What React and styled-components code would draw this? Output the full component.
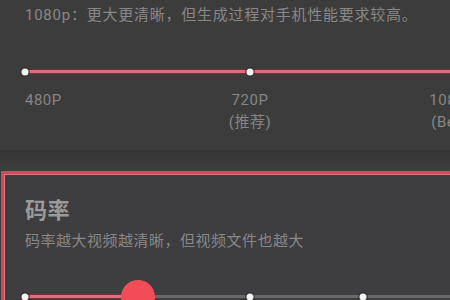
import React from "react";
import styled, { createGlobalStyle } from "styled-components";

const GlobalStyle = createGlobalStyle`
  html, body {
    margin: 0;
    padding: 0;
    background: #3c3c3c;
  }
  body {
    font-family: Roboto, "Noto Sans CJK SC", sans-serif;
  }
`;

const Screen = styled.div`
  width: 450px;
  height: 300px;
  overflow: hidden;
  background: #3c3c3c;
  color: #8c8c8c;
`;

const Section = styled.section`
  height: 150px;
  box-sizing: border-box;
  padding: 5px 0 0 25px;
`;

const Desc = styled.p`
  margin: ${(p) => p.$gap || 0}px 0 0;
  font-size: 15px;
  line-height: 20px;
  letter-spacing: ${(p) => p.$spacing || 0.5}px;
  white-space: nowrap;
  color: #888888;
`;

const Title = styled.h2`
  margin: 0;
  font-size: 22px;
  line-height: 30px;
  font-weight: 700;
  letter-spacing: 0.5px;
  color: #9a9a9a;
`;

const Divider = styled.div`
  height: 21px;
  background: linear-gradient(#343434, #3a3a3a 60%, #3e3e3e);
`;

const Card = styled.section`
  width: 470px;
  height: 140px;
  margin-left: 1px;
  box-sizing: border-box;
  border: 3px solid #d04b57;
  border-right: none;
  background: #3e3d3f;
  padding: 22px 0 0 21px;
  box-shadow: inset 1px 1px 0 #e07883;
`;

const Rail = styled.div`
  position: relative;
  width: 450px;
  height: 3px;
  margin-top: ${(p) => p.$top}px;
  background: #686868;
`;

const Fill = styled.div`
  height: 100%;
  width: ${(p) => p.$value * 100}%;
  background: #dc6f7e;
  box-shadow: 0 0 0 1px rgba(140, 40, 55, 0.85);
`;

const Dot = styled.span`
  position: absolute;
  top: 50%;
  left: ${(p) => p.$at * 100}%;
  width: 7px;
  height: 7px;
  border-radius: 50%;
  background: #f4f4f4;
  transform: translate(-50%, -50%);
  box-shadow: 0 0 0 1.5px rgba(45, 45, 45, 0.7);
`;

const Thumb = styled.span`
  position: absolute;
  top: 50%;
  left: ${(p) => p.$at * 100}%;
  width: 34px;
  height: 34px;
  border-radius: 50%;
  background: #f24c58;
  transform: translate(-50%, -50%);
`;

const Labels = styled.div`
  display: grid;
  grid-template-columns: 1fr 1fr 1fr;
  width: 450px;
  margin-top: 16px;
`;

const Label = styled.div`
  text-align: ${(p) => p.$align};
  font-size: 15px;
  line-height: 22px;
  letter-spacing: 0.5px;
  color: #858585;
`;

const Slider = ({ stops, value, thumb, top }) => (
  <Rail $top={top}>
    <Fill $value={value} />
    {stops.map((s) => (
      <Dot key={s} $at={s} />
    ))}
    {thumb && <Thumb $at={value} />}
  </Rail>
);

const resolutions = [
  { name: "480P", align: "left" },
  { name: "720P", note: "(推荐)", align: "center" },
  { name: "1080P", note: "(Beta)", align: "right" },
];

export default function App() {
  return (
    <Screen>
      <GlobalStyle />
      <Section>
        <Desc $spacing={0.75}>1080p：更大更清晰，但生成过程对手机性能要求较高。</Desc>
        <Slider stops={[0, 0.5, 1]} value={1} top={45} />
        <Labels>
          {resolutions.map((r) => (
            <Label key={r.name} $align={r.align}>
              {r.name}
              {r.note && <br />}
              {r.note}
            </Label>
          ))}
        </Labels>
      </Section>
      <Divider />
      <Card>
        <Title>码率</Title>
        <Desc $gap={5}>码率越大视频越清晰，但视频文件也越大</Desc>
        <Slider stops={[0, 0.25, 0.5, 0.75, 1]} value={0.25} thumb top={44} />
      </Card>
    </Screen>
  );
}
